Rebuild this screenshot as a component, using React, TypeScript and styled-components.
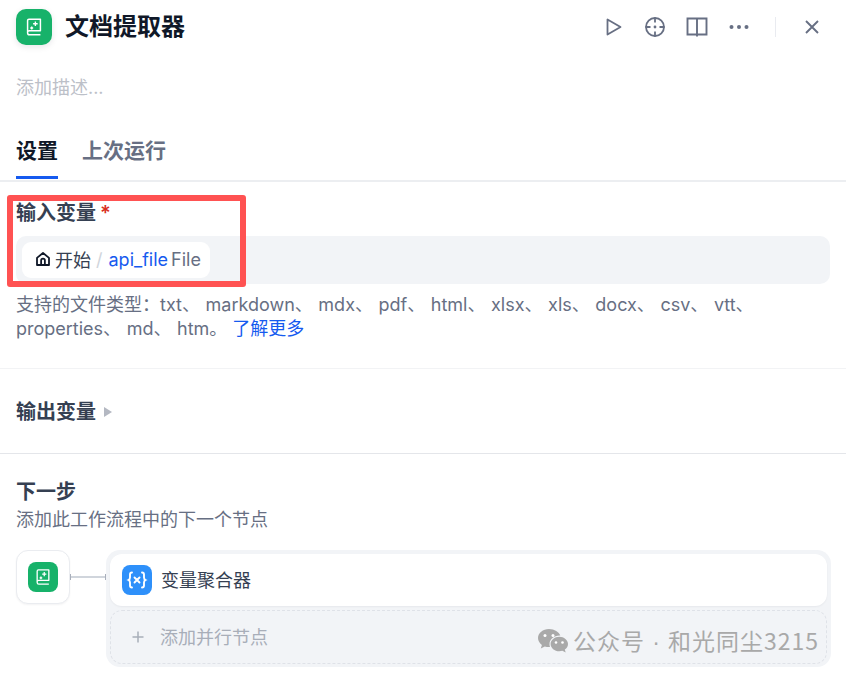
import React from 'react';
import styled, { createGlobalStyle } from 'styled-components';

const Global = createGlobalStyle`
  html, body { margin: 0; padding: 0; background: #fff; }
  body { font-family: Inter, "Noto Sans CJK SC", sans-serif; width: 846px; height: 675px; overflow: hidden; }
`;
const Page = styled.div`position: relative; width: 846px; height: 675px; background: #fff; overflow: hidden;`;
const Header = styled.header`display: flex; align-items: center; height: 36px; padding: 9px 16px 0;`;
const AppIcon = styled.div<{ $size: number; $radius: number; $bg: string; $shadow?: boolean }>`
  width: ${p => p.$size}px; height: ${p => p.$size}px; border-radius: ${p => p.$radius}px; background: ${p => p.$bg};
  display: flex; align-items: center; justify-content: center; flex: none; color: #fff;
  ${p => p.$shadow ? 'box-shadow: 0 2px 6px rgba(16,24,40,.1);' : ''}
`;
const Title = styled.h1`margin: 0 0 0 13px; font-size: 24px; line-height: 36px; font-weight: 700; color: #101828; flex: 1;`;
const Actions = styled.div`display: flex; align-items: center; color: #676f83;`;
const ActionBtn = styled.span<{ $mr: number }>`display: flex; width: 24px; height: 24px; align-items: center; justify-content: center; margin-right: ${p => p.$mr}px;`;
const VDivider = styled.span`width: 1px; height: 20px; background: #e9ebf0; margin: 0 24px 0 0;`;
const Description = styled.div`margin: 30px 16px 0; font-size: 18px; line-height: 26px; color: #bcc0c8;`;
const Tabs = styled.nav`display: flex; gap: 24px; padding: 0 16px; margin-top: 35px; height: 44px; border-bottom: 2px solid #eceef1;`;
const Tab = styled.span<{ $active?: boolean }>`
  font-size: 21px; line-height: 30px; font-weight: 600; height: 43px; box-sizing: border-box;
  color: ${p => p.$active ? '#101828' : '#676f83'};
  ${p => p.$active ? 'border-bottom: 3px solid #155aef;' : ''}
`;
const InputSection = styled.section`padding: 17px 16px 27px; border-bottom: 1px solid #f2f3f5;`;
const FieldLabel = styled.div`font-size: 20px; line-height: 28px; font-weight: 600; color: #354052;`;
const Star = styled.span`color: #d92d20; margin-left: 4px;`;
const VarInput = styled.div`display: flex; align-items: center; height: 48px; margin-top: 9px; padding: 0 6px; border-radius: 10px; background: #f2f4f7; box-sizing: border-box;`;
const VarChip = styled.div`display: flex; align-items: center; height: 36px; padding: 0 9px 2px 12px; box-sizing: border-box; border-radius: 9px; background: #fff; font-size: 18px; color: #354052;`;
const Slash = styled.span`color: #d0d5dc; margin: 0 6px 0 5px;`;
const VarName = styled.span`color: #155aef; margin-right: 3px;`;
const VarType = styled.span`color: #676f83;`;
const Help = styled.p`margin: 9px 0 0; font-size: 18px; line-height: 24px; color: #676f83; word-spacing: 0.5px;`;
const LearnMore = styled.span`color: #155aef; margin-left: 5px;`;
const OutputSection = styled.section`display: flex; align-items: center; height: 82px; padding: 2px 16px 0; border-bottom: 1px solid #e4e6ea;`;
const Caret = styled.span`margin-left: 8px; width: 0; height: 0; border-left: 8px solid #b4b8c2; border-top: 5px solid transparent; border-bottom: 5px solid transparent;`;
const NextSection = styled.section`padding: 24px 16px 0;`;
const NextTitle = styled.div`font-size: 20px; line-height: 28px; font-weight: 600; color: #354052;`;
const NextSub = styled.div`font-size: 18px; line-height: 24px; color: #676f83; margin-top: 2px;`;
const Flow = styled.div`display: flex; align-items: flex-start; margin-top: 18px; margin-right: -1px;`;
const SourceNode = styled.div`width: 54px; height: 54px; border: 1px solid #eaecf0; border-radius: 12px; background: #fff; box-shadow: 0 1px 2px rgba(16,24,40,.05); display: flex; align-items: center; justify-content: center; flex: none; box-sizing: border-box;`;
const Connector = styled.div`width: 36px; height: 10px; margin-top: 22px; flex: none; display: flex; align-items: center;`;
const Branches = styled.div`flex: 1; padding: 4px; background: #f2f4f7; border-radius: 14px; height: 117px; box-sizing: border-box;`;
const NextNode = styled.div`display: flex; align-items: center; height: 52px; padding: 0 12px; border-radius: 12px; background: #fff; font-size: 18px; color: #354052; box-shadow: 0 1px 2px rgba(16,24,40,.05);`;
const NodeText = styled.span`margin-left: 9px; padding-bottom: 2px;`;
const AddNode = styled.div`display: flex; align-items: center; height: 54px; margin-top: 4px; padding: 0 20px; border: 1px dashed #dfe2e8; border-radius: 12px; box-sizing: border-box; font-size: 18px; color: #a8aeb9;`;
const AddText = styled.span`margin-left: 15px; padding-bottom: 2px;`;
const Highlight = styled.div`position: absolute; left: 7px; top: 195px; width: 239px; height: 92px; border: 6px solid #ff5252; border-radius: 3px; box-sizing: border-box; pointer-events: none;`;
const Watermark = styled.div`position: absolute; left: 537px; top: 625px; display: flex; align-items: center; gap: 4px; font-size: 23px; line-height: 30px; letter-spacing: 1px; color: #a9a9a9; font-family: "Noto Sans CJK SC", sans-serif; white-space: pre;`;
const Dot = styled.span`font-family: "Liberation Sans", sans-serif; margin: 0 1px;`;
const WatermarkText = styled.span``;

const Book = ({ s }: { s: number }) => (
  <svg width={s} height={s} viewBox="0 0 24 24" fill="none" stroke="#fff" strokeWidth="1.600">
    <path d="M5 18.500V5a1.500 1.500 0 0 1 1.500-1.500H19V16H7a2 2 0 0 0-2 2.500Zm0 0A2 2 0 0 0 7 20.500H19" strokeLinejoin="round" />
    <path d="M13.500 6v5M11 8.500h5M9.500 11.500v3.200M7.900 13.100h3.200" strokeWidth="1.500" />
  </svg>
);

export default function App() {
  return (
    <Page>
      <Global />
      <Header>
        <AppIcon $size={36} $radius={10} $bg="#17b26a" $shadow><Book s={22} /></AppIcon>
        <Title>文档提取器</Title>
        <Actions>
          <ActionBtn $mr={17}>
            <svg width="24" height="24" viewBox="0 0 24 24" fill="none" stroke="currentColor" strokeWidth="1.800" strokeLinejoin="round"><path d="M5.500 4.500v15l13-7.500z" /></svg>
          </ActionBtn>
          <ActionBtn $mr={18}>
            <svg width="24" height="24" viewBox="0 0 24 24" fill="none" stroke="currentColor" strokeWidth="1.800"><circle cx="12" cy="12" r="9" /><path d="M12 2.500v5M12 16.500v5M2.500 12h5M16.500 12h5" /><circle cx="12" cy="12" r="1.400" fill="currentColor" stroke="none" /></svg>
          </ActionBtn>
          <ActionBtn $mr={18}>
            <svg width="24" height="24" viewBox="0 0 24 24" fill="none" stroke="currentColor" strokeWidth="1.900"><path d="M2.500 3.500h19v16h-19zM12 3.500v18" /></svg>
          </ActionBtn>
          <ActionBtn $mr={24}>
            <svg width="24" height="24" viewBox="0 0 24 24" fill="currentColor"><circle cx="4.500" cy="12" r="2" /><circle cx="12" cy="12" r="2" /><circle cx="19.500" cy="12" r="2" /></svg>
          </ActionBtn>
          <VDivider />
          <ActionBtn $mr={6}>
            <svg width="24" height="24" viewBox="0 0 24 24" fill="none" stroke="currentColor" strokeWidth="1.900"><path d="M6 6l12 12M18 6L6 18" /></svg>
          </ActionBtn>
        </Actions>
      </Header>
      <Description>添加描述...</Description>
      <Tabs>
        <Tab $active>设置</Tab>
        <Tab>上次运行</Tab>
      </Tabs>
      <InputSection>
        <FieldLabel>输入变量<Star>*</Star></FieldLabel>
        <VarInput>
          <VarChip>
            <svg width="18" height="18" viewBox="0 0 24 24" fill="none" stroke="#101828" strokeWidth="2.400" strokeLinejoin="round" style={{ marginRight: 3 }}><path d="M4 10.500 12 4l8 6.500V20H4zM9.500 20v-6a2.500 2.500 0 0 1 5 0v6" /></svg>
            开始<Slash>/</Slash><VarName>api_file</VarName><VarType>File</VarType>
          </VarChip>
        </VarInput>
        <Help>
          支持的文件类型：txt、 markdown、 mdx、 pdf、 html、 xlsx、 xls、 docx、 csv、 vtt、 properties、 md、 htm。<LearnMore>了解更多</LearnMore>
        </Help>
      </InputSection>
      <OutputSection>
        <FieldLabel>输出变量</FieldLabel>
        <Caret />
      </OutputSection>
      <NextSection>
        <NextTitle>下一步</NextTitle>
        <NextSub>添加此工作流程中的下一个节点</NextSub>
        <Flow>
          <SourceNode><AppIcon $size={30} $radius={8} $bg="#17b26a"><Book s={20} /></AppIcon></SourceNode>
          <Connector>
            <svg width="36" height="10" viewBox="0 0 36 10"><path d="M0.500 2v6M35.500 2v6" stroke="#a9afbb" strokeWidth="1" fill="none" /><path d="M1 5h34" stroke="#d0d5dc" strokeWidth="2" fill="none" /></svg>
          </Connector>
          <Branches>
            <NextNode>
              <AppIcon $size={30} $radius={8} $bg="#2e90fa">
                <svg width="24" height="24" viewBox="0 0 24 24" fill="none" stroke="#fff" strokeWidth="1.900" strokeLinecap="round"><path d="M7 4.500c-1.500 0-2 .7-2 2v3c0 1.300-.5 2-1.500 2.500 1 .5 1.500 1.200 1.500 2.500v3c0 1.300.5 2 2 2M17 4.500c1.500 0 2 .7 2 2v3c0 1.300.5 2 1.500 2.500-1 .5-1.500 1.200-1.500 2.500v3c0 1.300-.5 2-2 2M9.500 9.500l5 5M14.500 9.500l-5 5" /></svg>
              </AppIcon>
              <NodeText>变量聚合器</NodeText>
            </NextNode>
            <AddNode>
              <svg width="14" height="14" viewBox="0 0 14 14" stroke="#a8aeb9" strokeWidth="1.500"><path d="M7 1.500v11M1.500 7h11" /></svg>
              <AddText>添加并行节点</AddText>
            </AddNode>
          </Branches>
        </Flow>
      </NextSection>
      <Highlight />
      <Watermark>
        <svg width="32" height="26" viewBox="0 0 32 26" fill="#a9a9a9">
          <path d="M12 1C5.900 1 1 5 1 10c0 2.800 1.500 5.200 3.900 6.900L3.800 20.500l4-2.100c1.300.4 2.700.6 4.200.6h1c-.3-.9-.5-1.800-.5-2.800 0-4.800 4.500-8.600 10-8.600h.8C22.100 4 17.500 1 12 1Z" />
          <path d="M31 16c0-4-4-7.300-8.700-7.300S13.600 12 13.600 16s4 7.300 8.700 7.300c1.100 0 2.100-.2 3.100-.5l3.300 1.800-.9-3c2-1.300 3.200-3.300 3.200-5.600Z" />
          <circle cx="8" cy="7.500" r="1.500" fill="#fff" /><circle cx="16" cy="7.500" r="1.500" fill="#fff" /><circle cx="19" cy="14.500" r="1.300" fill="#fff" /><circle cx="25.500" cy="14.500" r="1.300" fill="#fff" />
        </svg>
        <WatermarkText>公众号 <Dot>·</Dot> 和光同尘3215</WatermarkText>
      </Watermark>
    </Page>
  );
}
